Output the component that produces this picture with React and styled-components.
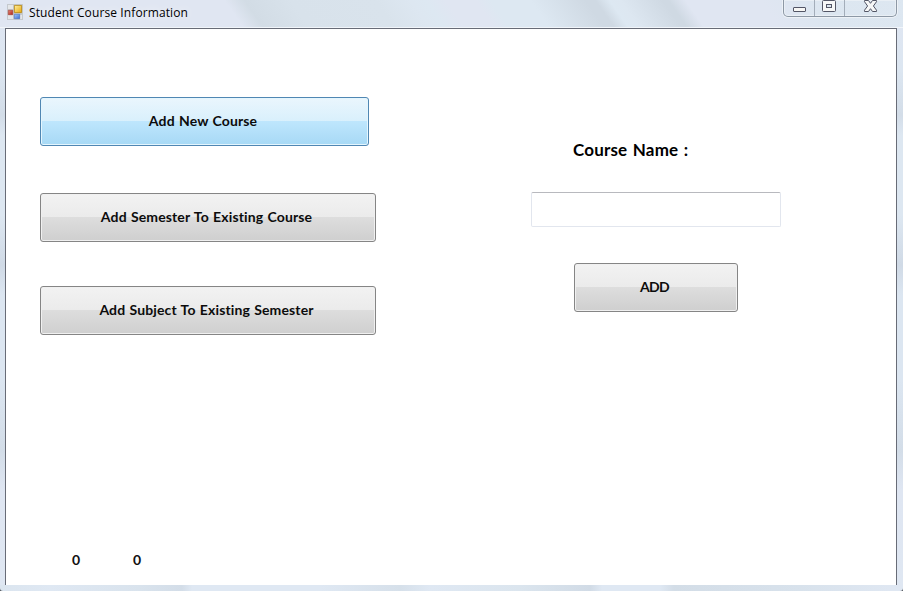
import React from "react";
import styled, { createGlobalStyle } from "styled-components";

const GlobalStyle = createGlobalStyle`
  *, *::before { box-sizing: border-box; }
  body { margin: 0; overflow: hidden; background: #50545a; }
`;

const Window = styled.div`
  width: 903px;
  height: 591px;
  display: flex;
  flex-direction: column;
  padding: 0 6px 6px 5px;
  overflow: hidden;
  border-radius: 0 0 3px 3px;
  background:
    linear-gradient(90deg, #dbe5ef 0, #dfe8f3 50px, #d9e3ed 140px, #d3dde8 182px, #dfe8f3 192px, #dfe8f3 320px,
      #d6e0ea 400px, #dfe8f3 430px, #dbe5ee 520px, #d1dbe6 590px, #dfe8f3 602px, #dfe8f3 660px, #d3dde7 674px,
      #d8e2ec 800px, #dfe7f2 890px) 0 585px / 903px 6px no-repeat,
    linear-gradient(180deg, #e0e6f2 0, #dce6f1 70px, #d3dde8 115px, #dde7f1 135px, #dde7f1 215px, #d0dae6 265px,
      #dce6f1 295px, #dce6f1 380px, #d3dde8 450px, #dfe6f2 490px, #dfe7f2 591px);
`;

const TitleBar = styled.header`
  height: 28px;
  flex: none;
  display: flex;
  align-items: flex-start;
  position: relative;
  margin: 0 -6px 0 -5px;
  padding: 0 6px 0 7px;
  isolation: isolate;

  &::before {
    content: "";
    position: absolute;
    z-index: -1;
    inset: 0 -20px;
    transform: skewX(35deg);
    border-bottom: 1px solid #f1f5fa;
    background: linear-gradient(90deg, #e0e6f2 0, #e0e6f2 254px, #d2dce5 274px, #d8e2eb 320px, #d9e3ec 405px,
      #dde7f1 440px, #dde8f2 455px, #e0e6f2 475px, #e0e6f2 505px, #dde8f2 520px, #dde8f2 560px, #cfd9e3 615px,
      #cfd9e3 625px, #dde8f2 639px, #dde7f1 650px, #cfd9e3 692px, #cfd9e3 698px, #e0e6f2 715px, #e0e6f2 790px,
      #dce6f0 840px, #dde7f1 943px);
  }
`;

const Title = styled.h1`
  margin: 4px 0 0 6px;
  font: 400 12px/17px "Open Sans", sans-serif;
  letter-spacing: 0.11px;
  color: #000;
  text-shadow: 0 0 8px #fff;
  white-space: nowrap;
`;

const AppIcon = styled.svg`
  flex: none;
  margin-top: 4px;
`;

const Controls = styled.div`
  display: flex;
  width: 114px;
  height: 17px;
  margin-left: auto;
  border: 1px solid #8d98a5;
  border-top: 0;
  border-radius: 0 0 5px 5px;
  box-shadow: 0 0 0 1px #edf2f7, inset 0 0 0 1px #e9eff5;
`;

const Control = styled.div`
  width: ${(p) => p.$width}px;
  border-left: ${(p) => (p.$first ? "0" : "1px solid #a3adb9")};

  svg { display: block; }
`;

const Client = styled.main`
  flex: 1;
  display: flex;
  flex-direction: column;
  background: #fff;
  border: 1px solid #686c77;
  border-bottom: 0;
  padding: 68px 0 0 34px;
`;

const Columns = styled.div`
  display: flex;
  height: 453px;
`;

const Menu = styled.nav`
  width: 491px;
  display: flex;
  flex-direction: column;
  align-items: flex-start;
`;

const Form = styled.section`
  width: 250px;
  display: flex;
  flex-direction: column;
  align-items: flex-start;
`;

const Button = styled.button`
  width: ${(p) => p.$width}px;
  height: 49px;
  flex: none;
  margin: ${(p) => p.$margin || "0"};
  padding: 0 3px 2px 0;
  border: 1px solid ${(p) => (p.$active ? "#5087b3" : "#858585")};
  border-radius: 3px;
  box-shadow: inset 0 0 0 1px ${(p) => (p.$active ? "#e4f6fe" : "#f0f0f0")};
  background: ${(p) =>
    p.$active
      ? "linear-gradient(#eaf6fd 0, #d9f0fc 49%, #bee6fd 50%, #a7d9f5 100%)"
      : "linear-gradient(#f2f2f2 0, #ebebeb 49%, #dddddd 50%, #cfcfcf 100%)"};
  color: #0c0c0c;
  font: 700 14px/18px Lato, sans-serif;
  letter-spacing: ${(p) => p.$spacing || "0.13px"};
  word-spacing: 0.7px;
  white-space: nowrap;
`;

const Label = styled.label`
  margin: 42px 0 0 42px;
  color: #000;
  font: 700 17px/22px Lato, sans-serif;
  letter-spacing: 0.17px;
  word-spacing: 1.2px;
`;

const Input = styled.input`
  width: 250px;
  height: 35px;
  margin: 31px 0 36px;
  border: 1px solid #e2e6ee;
  border-top-color: #b8b9be;
  border-radius: 2px;
  outline: 0;
`;

const Counters = styled.footer`
  display: flex;
  gap: 53px;
  padding-left: 32px;
  color: #111;
  font: 700 14px/20px Lato, sans-serif;
`;

const Counter = styled.span`
  width: 8px;
`;

export default function App() {
  return (
    <>
      <GlobalStyle />
      <Window>
        <TitleBar>
          <AppIcon width="16" height="16" viewBox="0 0 16 16">
            <defs>
              <linearGradient id="gold" x2="1" y2="1"><stop stopColor="#fff0a0" /><stop offset="1" stopColor="#e8a70c" /></linearGradient>
              <linearGradient id="red" x2="1" y2="1"><stop stopColor="#e98a78" /><stop offset="1" stopColor="#ae1f14" /></linearGradient>
              <linearGradient id="blue" x2="1" y2="1"><stop stopColor="#9fc4fa" /><stop offset="1" stopColor="#3c70d4" /></linearGradient>
            </defs>
            <path fill="#c5c9ce" d="M0 0h16v16H0z" />
            <path fill="#e5e7e9" d="M1 1h5v4H1zM1 11h5v4H1zM13 11h2v4h-2z" />
            <path fill="url(#gold)" stroke="#b8860b" strokeWidth=".8" d="M7.4 1.4h7.2v7.2H7.4z" />
            <path fill="url(#red)" stroke="#a43b31" strokeWidth=".6" d="M1.3 6.3h4.4v4.4H1.3z" />
            <path fill="url(#blue)" stroke="#4771bf" strokeWidth=".6" d="M7.3 10.3h5.4v4.4H7.3z" />
          </AppIcon>
          <Title>Student Course Information</Title>
          <Controls>
            <Control $first $width={30}>
              <svg width="29" height="16"><rect x="9.5" y="7.5" width="12" height="4" rx=".5" fill="#f7f7f5" stroke="#535666" /></svg>
            </Control>
            <Control $width={30}>
              <svg width="29" height="16" fill="#f6f7f7" stroke="#535666">
                <rect x="7.5" y=".5" width="13" height="11" rx="1" />
                <rect x="11.5" y="4.5" width="5" height="3" fill="#dce6ef" />
              </svg>
            </Control>
            <Control $width={52}>
              <svg width="51" height="16"><path d="M19.5.5h4l2 2.8 2-2.8h4v1.2L28.4 6l3.1 4.2v1.3h-4l-2-2.8-2 2.8h-4v-1.3L22.6 6l-3.1-4.3z" fill="#f6f7f7" stroke="#535666" /></svg>
            </Control>
          </Controls>
        </TitleBar>
        <Client>
          <Columns>
            <Menu>
              <Button $active $width={329}>Add New Course</Button>
              <Button $width={336} $margin="47px 0 44px">Add Semester To Existing Course</Button>
              <Button $width={336}>Add Subject To Existing Semester</Button>
            </Menu>
            <Form>
              <Label htmlFor="course">Course Name :</Label>
              <Input id="course" />
              <Button $width={164} $margin="0 0 0 43px" $spacing="-0.6px">ADD</Button>
            </Form>
          </Columns>
          <Counters>
            <Counter>0</Counter>
            <Counter>0</Counter>
          </Counters>
        </Client>
      </Window>
    </>
  );
}
